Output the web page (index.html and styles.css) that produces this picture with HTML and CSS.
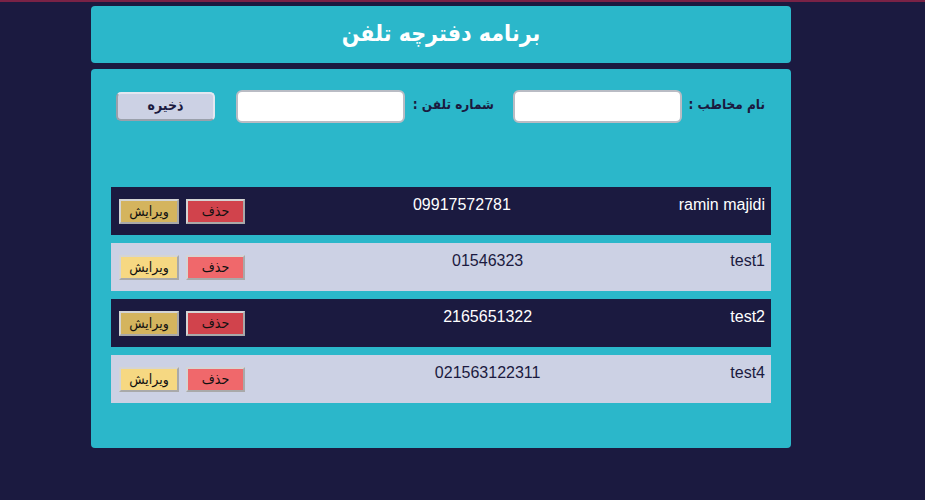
FILE: index.html
```html
<!DOCTYPE html>
<html lang="fa" dir="rtl">
<head>
<meta charset="utf-8">
<title>برنامه دفترچه تلفن</title>
<link rel="stylesheet" href="styles.css">
</head>
<body>
<div class="app">
  <header class="title-box">
    <h1 class="title">برنامه دفترچه تلفن</h1>
  </header>
  <main class="panel">
    <form class="form">
      <label class="label label-name">نام مخاطب :</label>
      <input class="input input-name" type="text">
      <label class="label label-phone">شماره تلفن :</label>
      <input class="input input-phone" type="text">
      <button type="button" class="save">ذخیره</button>
    </form>
    <div class="list">
      <div class="row dark">
        <span class="name">ramin majidi</span>
        <span class="phone">09917572781</span>
        <span class="actions"><button class="btn del">حذف</button><button class="btn edit">ویرایش</button></span>
      </div>
      <div class="row light">
        <span class="name">test1</span>
        <span class="phone">01546323</span>
        <span class="actions"><button class="btn del">حذف</button><button class="btn edit">ویرایش</button></span>
      </div>
      <div class="row dark">
        <span class="name">test2</span>
        <span class="phone">2165651322</span>
        <span class="actions"><button class="btn del">حذف</button><button class="btn edit">ویرایش</button></span>
      </div>
      <div class="row light">
        <span class="name">test4</span>
        <span class="phone">021563122311</span>
        <span class="actions"><button class="btn del">حذف</button><button class="btn edit">ویرایش</button></span>
      </div>
    </div>
  </main>
</div>
</body>
</html>
```
FILE: styles.css
```css
html, body {
  margin: 0;
  padding: 0;
}
body {
  background: #1b1a40;
  border-top: 2px solid #7a2246;
  height: 498px;
  font-family: "Liberation Sans", "DejaVu Sans", Arial, sans-serif;
  direction: rtl;
}
.app {
  width: 700px;
  margin-right: 134px;
  margin-left: 91px;
  padding-top: 4px;
}
.title-box {
  background: #2bb7ca;
  border-radius: 4px;
  height: 57px;
  display: flex;
  align-items: center;
  justify-content: center;
}
.title {
  margin: 0 0 3px 0;
  color: #fff;
  font-size: 23px;
  font-weight: bold;
  font-family: "DejaVu Sans Condensed", "DejaVu Sans", sans-serif;
}
.panel {
  margin-top: 6px;
  background: #2bb7ca;
  border-radius: 4px;
  height: 379px;
  box-sizing: border-box;
  padding: 21px 20px 0 20px;
}
.form {
  display: flex;
  align-items: center;
  padding-right: 6px;
  height: 33px;
  margin: 0;
}
.label {
  flex: none;
  white-space: nowrap;
  color: #1b1a40;
  font-weight: bold;
  font-size: 13.5px;
  font-family: "DejaVu Sans Condensed", "DejaVu Sans", sans-serif;
  margin-top: -5px;
  overflow: visible;
}
.label-name {
  width: 79px;
  margin-left: 4px;
}
.label-phone {
  width: 84px;
  margin-left: 5px;
}
.input {
  flex: none;
  width: 169px;
  height: 33px;
  box-sizing: border-box;
  border: 2px solid #b9bcc4;
  border-radius: 6px;
  background: #fff;
}
.input-name {
  margin-left: 19px;
}
.input-phone {
  margin-left: 21px;
}
.save {
  flex: none;
  width: 99px;
  height: 29px;
  background: #ccd1e4;
  border: 2px solid #9aa0ab;
  border-top-color: #e4e7f0;
  border-right-color: #e4e7f0;
  border-radius: 5px;
  color: #1b1a40;
  font-weight: bold;
  font-size: 14px;
  font-family: "DejaVu Sans Condensed", "DejaVu Sans", sans-serif;
  padding: 0 0 3px 0;
}
.list {
  margin-top: 64px;
  display: flex;
  flex-direction: column;
  gap: 8px;
}
.row {
  height: 48px;
  box-sizing: border-box;
  padding: 9px 6px 0 8px;
  display: flex;
  justify-content: space-between;
  align-items: flex-start;
  font-size: 16px;
}
.dark {
  background: #1b1a40;
  color: #ffffff;
}
.light {
  background: #ccd1e4;
  color: #1b1a40;
}
.actions {
  display: flex;
  gap: 7px;
  margin-top: 3px;
}
.btn {
  height: 25px;
  box-sizing: border-box;
  border: 2px solid #a9a9a9;
  border-top-color: #d4d4d4;
  border-left-color: #d4d4d4;
  font-size: 14px;
  font-family: "DejaVu Sans Condensed", "DejaVu Sans", sans-serif;
  color: #111;
  padding: 0 0 2px 0;
}
.del {
  width: 59px;
}
.edit {
  width: 60px;
}
.dark .del { background: #d1434c; }
.dark .edit { background: #d4b45e; }
.light .del { background: #f0686b; }
.light .edit { background: #f6d882; }
```
